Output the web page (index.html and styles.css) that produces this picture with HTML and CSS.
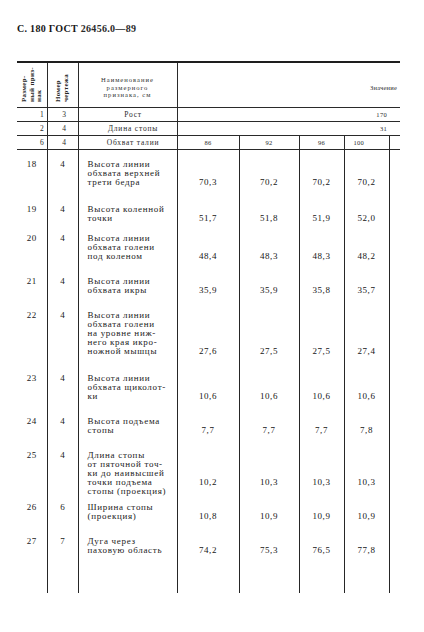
FILE: index.html
```html
<!DOCTYPE html>
<html lang="ru">
<head>
<meta charset="utf-8">
<title>ГОСТ 26456.0—89, с. 180</title>
<link rel="stylesheet" href="styles.css">
</head>
<body>
<div class="page">
  <div class="running-head">С. 180 ГОСТ <span class="doc">26456.0—89</span></div>
  <table class="gost">
    <colgroup>
      <col class="c-num"><col class="c-fig"><col class="c-name"><col class="c-v1"><col class="c-v2"><col class="c-v3"><col class="c-v4"><col class="c-stub">
    </colgroup>
    <thead>
      <tr class="head">
        <th class="rot-cell"><div class="rot">Размер-<br>ный приз-<br>нак</div></th>
        <th class="rot-cell"><div class="rot">Номер<br>чертежа</div></th>
        <th class="h-name">Наименование<br>размерного<br>признака, см</th>
        <th class="h-value" colspan="5">Значение</th>
      </tr>
    </thead>
    <tbody class="sub">
      <tr><td class="s-num">1</td><td class="s-fig">3</td><td class="s-name">Рост</td><td class="s-span" colspan="5">170</td></tr>
      <tr><td class="s-num">2</td><td class="s-fig">4</td><td class="s-name">Длина стопы</td><td class="s-span" colspan="5">31</td></tr>
      <tr><td class="s-num">6</td><td class="s-fig">4</td><td class="s-name">Обхват талии</td><td class="s-size">86</td><td class="s-size">92</td><td class="s-size">96</td><td class="s-size s-last">100</td><td></td></tr>
    </tbody>
    <tbody class="body">
      <tr class="first loose">
        <td class="b-num">18</td><td class="b-fig">4</td>
        <td class="b-name">Высота линии<br>обхвата верхней<br>трети бедра</td>
        <td class="b-val">70,3</td><td class="b-val">70,2</td><td class="b-val">70,2</td><td class="b-val">70,2</td><td></td>
      </tr>
      <tr class="tight">
        <td class="b-num">19</td><td class="b-fig">4</td>
        <td class="b-name">Высота коленной<br>точки</td>
        <td class="b-val">51,7</td><td class="b-val">51,8</td><td class="b-val">51,9</td><td class="b-val">52,0</td><td></td>
      </tr>
      <tr>
        <td class="b-num">20</td><td class="b-fig">4</td>
        <td class="b-name">Высота линии<br>обхвата голени<br>под коленом</td>
        <td class="b-val">48,4</td><td class="b-val">48,3</td><td class="b-val">48,3</td><td class="b-val">48,2</td><td></td>
      </tr>
      <tr>
        <td class="b-num">21</td><td class="b-fig">4</td>
        <td class="b-name">Высота линии<br>обхвата икры</td>
        <td class="b-val">35,9</td><td class="b-val">35,9</td><td class="b-val">35,8</td><td class="b-val">35,7</td><td></td>
      </tr>
      <tr class="loose">
        <td class="b-num">22</td><td class="b-fig">4</td>
        <td class="b-name">Высота линии<br>обхвата голени<br>на уровне ниж-<br>него края икро-<br>ножной мышцы</td>
        <td class="b-val">27,6</td><td class="b-val">27,5</td><td class="b-val">27,5</td><td class="b-val">27,4</td><td></td>
      </tr>
      <tr>
        <td class="b-num">23</td><td class="b-fig">4</td>
        <td class="b-name">Высота линии<br>обхвата щиколот-<br>ки</td>
        <td class="b-val">10,6</td><td class="b-val">10,6</td><td class="b-val">10,6</td><td class="b-val">10,6</td><td></td>
      </tr>
      <tr>
        <td class="b-num">24</td><td class="b-fig">4</td>
        <td class="b-name">Высота подъема<br>стопы</td>
        <td class="b-val">7,7</td><td class="b-val">7,7</td><td class="b-val">7,7</td><td class="b-val">7,8</td><td></td>
      </tr>
      <tr class="tighter">
        <td class="b-num">25</td><td class="b-fig">4</td>
        <td class="b-name">Длина стопы<br>от пяточной точ-<br>ки до наивысшей<br>точки подъема<br>стопы (проекция)</td>
        <td class="b-val b-up">10,2</td><td class="b-val b-up">10,3</td><td class="b-val b-up">10,3</td><td class="b-val b-up">10,3</td><td></td>
      </tr>
      <tr>
        <td class="b-num">26</td><td class="b-fig">6</td>
        <td class="b-name">Ширина стопы<br>(проекция)</td>
        <td class="b-val">10,8</td><td class="b-val">10,9</td><td class="b-val">10,9</td><td class="b-val">10,9</td><td></td>
      </tr>
      <tr class="last">
        <td class="b-num">27</td><td class="b-fig">7</td>
        <td class="b-name">Дуга через<br>паховую область</td>
        <td class="b-val">74,2</td><td class="b-val">75,3</td><td class="b-val">76,5</td><td class="b-val">77,8</td><td></td>
      </tr>
    </tbody>
  </table>
</div>
</body>
</html>
```

FILE: styles.css
```css
* { box-sizing: border-box; }

html, body {
  margin: 0;
  background: #ffffff;
}

body {
  font-family: "Liberation Serif", "Times New Roman", serif;
  color: #1e1e1e;
}

.page {
  width: 424px;
  height: 632px;
  padding: 23px 0 0 17px;
  overflow: hidden;
}

.running-head {
  font-size: 10px;
  line-height: 12px;
  font-weight: bold;
  letter-spacing: 0.3px;
  color: #161616;
}

.running-head .doc {
  font-weight: bold;
  color: #2a2a2a;
}

.gost {
  margin-top: 26px;
  border-collapse: collapse;
  table-layout: fixed;
  width: 383px;
}

.c-num { width: 30px; }
.c-fig { width: 31px; }
.c-name { width: 99px; }
.c-v1 { width: 62px; }
.c-v2 { width: 60px; }
.c-v3 { width: 45px; }
.c-v4 { width: 45px; }
.c-stub { width: 11px; }

.gost th,
.gost td {
  padding: 0;
  font-weight: normal;
}

/* header row */
.head th {
  height: 45px;
  border-top: 2px solid #1e1e1e;
  border-bottom: 1px solid #2a2a2a;
}

.head th + th {
  border-left: 1px solid #2a2a2a;
}

.rot-cell {
  vertical-align: bottom;
  text-align: center;
  padding-bottom: 6px;
}

.rot {
  display: inline-block;
  writing-mode: vertical-rl;
  transform: rotate(180deg);
  font-size: 7px;
  line-height: 7.5px;
  font-weight: bold;
  letter-spacing: 0.3px;
  text-align: start;
  color: #262626;
}

.gost .h-name {
  vertical-align: middle;
  text-align: center;
  padding-top: 5px;
  font-size: 6.6px;
  line-height: 7.5px;
  letter-spacing: 1px;
  color: #333;
}

.gost .h-value {
  vertical-align: middle;
  text-align: right;
  padding: 5px 3px 0 0;
  font-size: 6.5px;
  letter-spacing: 0.2px;
  color: #333;
}

/* rows 1, 2, 6 */
.sub td {
  height: 14px;
  border-bottom: 1px solid #2a2a2a;
  font-size: 7.5px;
  line-height: 9px;
  letter-spacing: 0.8px;
  vertical-align: middle;
  color: #2a2a2a;
}

.sub td + td {
  border-left: 1px solid #2a2a2a;
}

.sub .s-num {
  text-align: right;
  padding-right: 2px;
}

.sub .s-fig {
  text-align: center;
  padding-left: 4px;
}

.sub .s-name {
  text-align: center;
  padding-left: 11px;
}

.sub .s-span {
  text-align: right;
  padding-right: 13px;
  font-size: 6.5px;
  letter-spacing: 0.3px;
}

.sub .s-size {
  text-align: center;
  font-size: 6.5px;
  letter-spacing: 0.3px;
}

.sub .s-last {
  text-align: left;
  padding-left: 9px;
}

/* main body rows */
.body td {
  padding-top: 4px;
  padding-bottom: 12px;
  font-size: 9px;
  line-height: 9px;
  vertical-align: top;
}

.body td + td {
  border-left: 1px solid #262626;
}

.body .first td { padding-top: 10px; }
.body .loose td { padding-bottom: 14px; }
.body .tight td { padding-bottom: 7px; }
.body .tighter td { padding-bottom: 3px; }
.body .last td { padding-bottom: 38px; }

.b-num {
  text-align: center;
  letter-spacing: 0.5px;
  color: #1a1a1a;
}

.b-fig {
  text-align: center;
  padding-left: 4px;
  color: #1a1a1a;
}

.gost .b-name {
  padding-left: 9px;
  letter-spacing: 0.7px;
  white-space: nowrap;
  color: #222;
}

.gost .b-val {
  vertical-align: bottom;
  text-align: center;
  letter-spacing: 0.6px;
  color: #161616;
}

.gost .tighter .b-up {
  padding-bottom: 12px;
}
```
